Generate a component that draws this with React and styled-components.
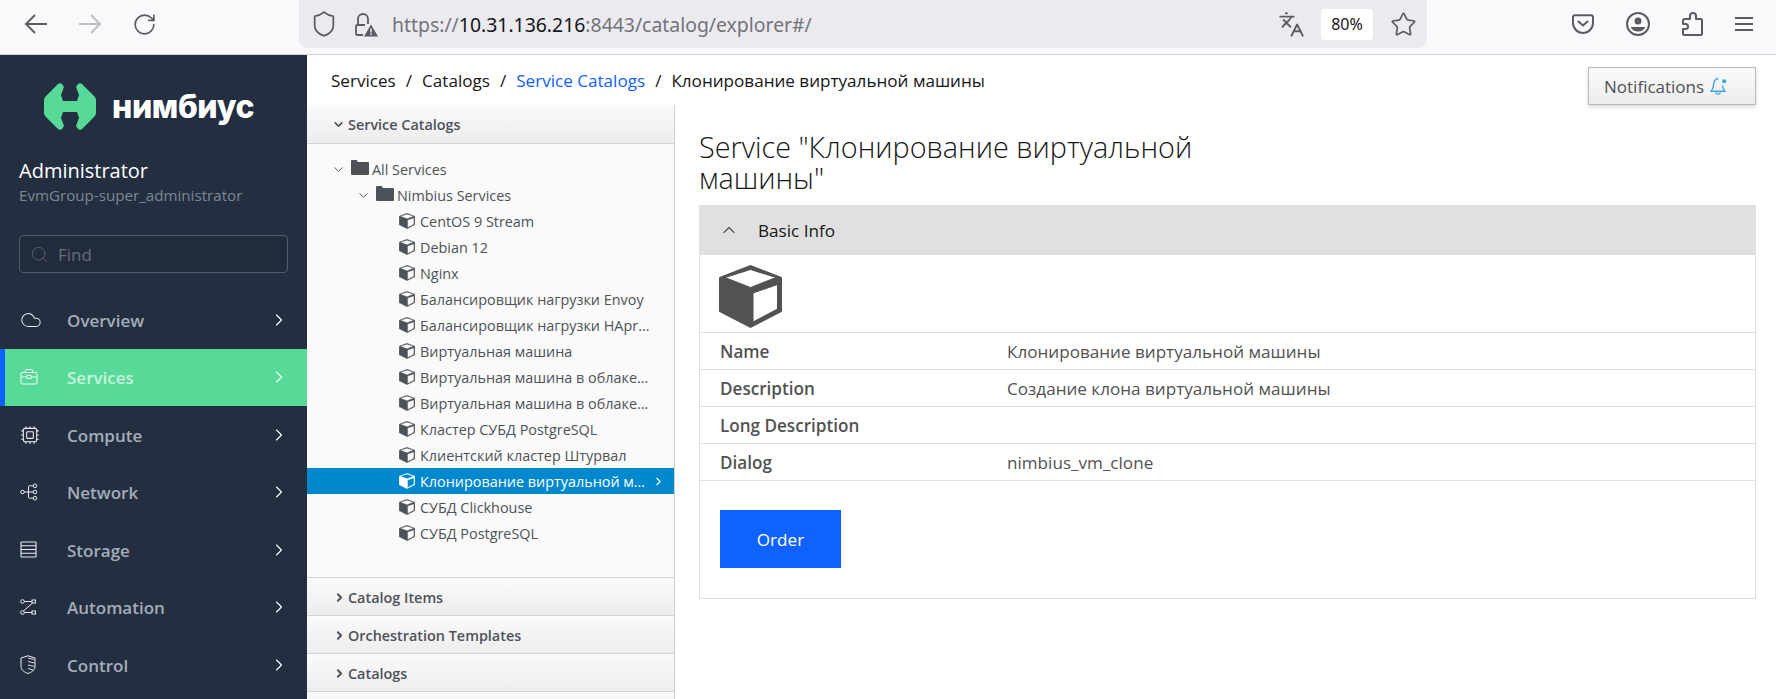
import styled, { createGlobalStyle } from 'styled-components';
import { Shield, Star, Languages, ChevronRight, ChevronDown, ChevronUp, Cloud, Cpu, Search, RotateCw } from 'lucide-react';

const GlobalStyle = createGlobalStyle`
    html, body {
        margin: 0;
        padding: 0;
        background: #fff;
        font-family: "Open Sans", "Noto Sans", sans-serif;
    }
    * { box-sizing: border-box; }
`

const menu = ['Overview', 'Services', 'Compute', 'Network', 'Storage', 'Automation', 'Control'];

const services = [
    'CentOS 9 Stream',
    'Debian 12',
    'Nginx',
    'Балансировщик нагрузки Envoy',
    'Балансировщик нагрузки HApr…',
    'Виртуальная машина',
    'Виртуальная машина в облаке…',
    'Виртуальная машина в облаке…',
    'Кластер СУБД PostgreSQL',
    'Клиентский кластер Штурвал',
    'Клонирование виртуальной м…',
    'СУБД Clickhouse',
    'СУБД PostgreSQL',
];

const info = [
    ['Name', 'Клонирование виртуальной машины'],
    ['Description', 'Создание клона виртуальной машины'],
    ['Long Description', ''],
    ['Dialog', 'nimbius_vm_clone'],
];

function ArrowIcon({ color, flip }) {
    return (
        <svg width="24" height="22" viewBox="0 0 24 22" fill="none" stroke={color} strokeWidth="1.9"
            style={flip ? { transform: 'scaleX(-1)' } : undefined}>
            <path d="M2 11H23M11 2 2 11l9 9" />
        </svg>
    )
}

function LockIcon() {
    return (
        <svg width="24" height="25" viewBox="0 0 24 25" fill="none">
            <path d="M4 13V7a5 5 0 0 1 10 0v5" stroke="#5b5b66" strokeWidth="1.8" />
            <path d="M9 23H3.500A1.500 1.500 0 0 1 2 21.500v-7A1.500 1.500 0 0 1 3.500 13H11" stroke="#5b5b66" strokeWidth="1.8" />
            <path d="M17 12.500 24 24.500H10Z" fill="#5b5b66" />
            <path d="M17 16.500v4M17 21.600v1.400" stroke="#ebebef" strokeWidth="1.500" />
        </svg>
    )
}

function PocketIcon() {
    return (
        <svg width="22" height="20" viewBox="0 0 22 20" fill="none" stroke="#5b5b66" strokeWidth="2">
            <path d="M3 1.200h16a2 2 0 0 1 2 2V9a10 10 0 0 1-20 0V3.200a2 2 0 0 1 2-2Z" />
            <path d="M6.500 7.500 11 11.500l4.500-4" strokeLinecap="round" />
        </svg>
    )
}

function AccountIcon() {
    return (
        <svg width="24" height="24" viewBox="0 0 24 24" fill="none">
            <circle cx="12" cy="12" r="11" stroke="#5b5b66" strokeWidth="2" />
            <circle cx="12" cy="9" r="3.500" fill="#5b5b66" />
            <path d="M4.500 15h15a8.500 8.500 0 0 1-15 0Z" fill="#5b5b66" />
        </svg>
    )
}

function PuzzleIcon() {
    return (
        <svg width="21" height="24" viewBox="0 0 21 24" fill="none" stroke="#5b5b66" strokeWidth="2" strokeLinejoin="round">
            <path d="M7 23H2.500A1.500 1.500 0 0 1 1 21.500V17h2.500a2.500 2.500 0 0 0 0-5H1V8.500A1.500 1.500 0 0 1 2.500 7H8V4a3 3 0 0 1 6 0v3h4.500A1.500 1.500 0 0 1 20 8.500v13a1.500 1.500 0 0 1-1.500 1.500H7Z" />
        </svg>
    )
}

function HamburgerIcon() {
    return (
        <svg width="18" height="16" viewBox="0 0 18 16" stroke="#5b5b66" strokeWidth="1.900">
            <path d="M0 2h18M0 8h18M0 14h18" />
        </svg>
    )
}

function LogoMark() {
    return (
        <svg width="52" height="47" viewBox="0 0 52 47">
            <path
                fill="#57da98"
                d="M14 1Q16-.5 18 1L20 4 17 12 19 18H33L35 12 32 4 34 1Q36-.5 38 1L50 13Q52 15 52 17V30Q52 32 50 34L38 46Q36 47.500 34 46L32 43 35 35 33 29H19L17 35 20 43 18 46Q16 47.500 14 46L2 34Q0 32 0 30V17Q0 15 2 13Z"
            />
        </svg>
    )
}

function CubeIcon({ size }) {
    return (
        <svg width={size} height={size} viewBox="0 0 63 63" style={{ flex: 'none' }}>
            <path
                fill="currentColor"
                stroke="currentColor"
                strokeWidth="1"
                strokeLinejoin="round"
                fillRule="evenodd"
                d="M31.500 .5 62.500 12.500V46.500L31.500 62.500 .5 46.500V12.500ZM31.500 4.500 6 12.500 31.500 22.500 57 12.500ZM34 28V57L58.500 44V19.500Z"
            />
        </svg>
    )
}

function FolderIcon() {
    return (
        <svg width="18" height="15" viewBox="0 0 18 15" style={{ flex: 'none' }}>
            <path fill="currentColor" d="M0 1a1 1 0 0 1 1-1h4.500l1.500 2h10a1 1 0 0 1 1 1v11a1 1 0 0 1-1 1H1a1 1 0 0 1-1-1Z" />
        </svg>
    )
}

function BriefcaseIcon() {
    return (
        <svg width="18" height="16" viewBox="0 0 18 16" fill="none" stroke="currentColor" strokeWidth="1">
            <rect x="1" y="3.500" width="16" height="11.500" rx="1" />
            <path d="M5.500 3.500V1.500a1 1 0 0 1 1-1h5a1 1 0 0 1 1 1v2M1 8h6M11 8h6" />
            <rect x="7" y="6.500" width="4" height="3" />
        </svg>
    )
}

function NetworkIcon() {
    return (
        <svg width="18" height="18" viewBox="0 0 18 18" fill="none" stroke="currentColor" strokeWidth="1">
            <circle cx="2.500" cy="9" r="1.800" />
            <circle cx="15" cy="2.800" r="1.800" />
            <circle cx="15" cy="9" r="1.800" />
            <circle cx="15" cy="15.200" r="1.800" />
            <path d="M4.300 9h9M8.500 9V3.500a.7.7 0 0 1 .7-.7h4M8.500 9v5.500a.7.7 0 0 0 .7.7h4" />
        </svg>
    )
}

function StorageIcon() {
    return (
        <svg width="17" height="17" viewBox="0 0 17 17" fill="none" stroke="currentColor" strokeWidth="1.100">
            <rect x="1" y="1" width="15" height="15" rx=".5" />
            <path d="M1 4.800h15M1 8.500h15M1 12.200h15" />
        </svg>
    )
}

function AutomationIcon() {
    return (
        <svg width="16" height="16" viewBox="0 0 16 16" fill="none" stroke="currentColor" strokeWidth="1">
            <circle cx="2.500" cy="2.500" r="1.800" />
            <rect x="12" y="1" width="3.500" height="3" />
            <circle cx="2.500" cy="13.500" r="1.800" />
            <rect x="12" y="12" width="3.500" height="3" />
            <path d="M4.300 2.500H12M4.300 13.500H12M12.500 4 3.500 12" />
        </svg>
    )
}

function ShieldStripesIcon() {
    return (
        <svg width="16" height="19" viewBox="0 0 16 19" fill="none" stroke="currentColor" strokeWidth="1">
            <path d="M8 .8 15 3v8.500c0 3.500-3.500 5.800-7 7-3.500-1.200-7-3.500-7-7V3Z" />
            <path d="M8 3 14 4.500M8 6.500 14.500 8M8 10 14.500 11.500M8 13.500 13 15" strokeWidth=".9" />
        </svg>
    )
}

function BellIcon() {
    return (
        <svg width="18" height="21" viewBox="0 0 17 20" fill="none" stroke="#39a5dc" strokeWidth="1.300">
            <path d="M7 1.500v1.300C4 3.500 3.300 6 3.300 8.500c0 3-1.300 4.500-2.300 6h13c-1-1.500-2-2.800-2.200-5.500" />
            <path d="M5.300 15.500a2.300 2.300 0 0 0 4.500 0" />
            <circle cx="13.500" cy="5" r="2" fill="#39a5dc" stroke="none" />
        </svg>
    )
}

const menuIcons = {
    Overview: <Cloud size={22} strokeWidth={1.1} />,
    Services: <BriefcaseIcon />,
    Compute: <Cpu size={20} strokeWidth={1.3} />,
    Network: <NetworkIcon />,
    Storage: <StorageIcon />,
    Automation: <AutomationIcon />,
    Control: <ShieldStripesIcon />,
};

function App() {
    return (
        <Page>
            <GlobalStyle />
            <BrowserBar>
                <NavButtons>
                    <ArrowIcon color="#5b5b66" />
                    <ArrowIcon color="#bdbdc2" flip />
                    <RotateCw size={25} color="#5b5b66" strokeWidth={1.6} />
                </NavButtons>
                <AddressBar>
                    <Shield size={28} color="#5b5b66" strokeWidth={1.5} />
                    <LockIcon />
                    <Url>https://<b>10.31.136.216</b>:8443/catalog/explorer#/</Url>
                    <Languages size={27} color="#5b5b66" strokeWidth={1.6} />
                    <ZoomChip>80%</ZoomChip>
                    <Star size={27} color="#5b5b66" strokeWidth={1.500} />
                </AddressBar>
                <BrowserTools>
                    <PocketIcon />
                    <AccountIcon />
                    <PuzzleIcon />
                    <HamburgerIcon />
                </BrowserTools>
            </BrowserBar>

            <Body>
                <Sidebar>
                    <Logo>
                        <LogoMark />
                        <LogoText>нимбиус</LogoText>
                    </Logo>
                    <UserName>Administrator</UserName>
                    <UserGroup>EvmGroup-super_administrator</UserGroup>
                    <SearchBox>
                        <Search size={19} strokeWidth={1.1} color="#5c6570" />
                        <span>Find</span>
                    </SearchBox>
                    <nav>
                        {menu.map((item) =>
                            <MenuItem key={item} $active={item === 'Services'}>
                                <MenuIcon>{menuIcons[item]}</MenuIcon>
                                <MenuLabel>{item}</MenuLabel>
                                <ChevronRight size={20} strokeWidth={1.3} color="#fff" />
                            </MenuItem>
                        )}
                    </nav>
                </Sidebar>

                <Main>
                    <Breadcrumb>
                        <span>Services</span><Sep>/</Sep>
                        <span>Catalogs</span><Sep>/</Sep>
                        <CrumbLink>Service Catalogs</CrumbLink><Sep>/</Sep>
                        <span>Клонирование виртуальной машины</span>
                    </Breadcrumb>
                    <NotifyButton>Notifications <BellIcon /></NotifyButton>

                    <Columns>
                        <TreePane>
                            <AccordionHead $open>
                                <ChevronDown size={13} strokeWidth={3} />
                                Service Catalogs
                            </AccordionHead>
                            <Tree>
                                <FolderRow $level={0}>
                                    <ChevronDown size={15} strokeWidth={1.5} />
                                    <FolderIcon />
                                    All Services
                                </FolderRow>
                                <FolderRow $level={1}>
                                    <ChevronDown size={15} strokeWidth={1.5} />
                                    <FolderIcon />
                                    Nimbius Services
                                </FolderRow>
                                {services.map((name, index) =>
                                    <LeafRow key={index} $selected={index === 10}>
                                        <CubeIcon size={16} />
                                        <span>{name}</span>
                                        {index === 10 && <SelectedArrow><ChevronRight size={13} strokeWidth={2} /></SelectedArrow>}
                                    </LeafRow>
                                )}
                            </Tree>
                            <AccordionHead><ChevronRight size={13} strokeWidth={3.500} />Catalog Items</AccordionHead>
                            <AccordionHead><ChevronRight size={13} strokeWidth={3.500} />Orchestration Templates</AccordionHead>
                            <AccordionHead><ChevronRight size={13} strokeWidth={3.500} />Catalogs</AccordionHead>
                            <AccordionHead />
                        </TreePane>

                        <Content>
                            <Title>Service "Клонирование виртуальной машины"</Title>
                            <Panel>
                                <PanelHead>
                                    <ChevronUp size={20} strokeWidth={1.4} color="#525252" />
                                    Basic Info
                                </PanelHead>
                                <BigCube><CubeIcon size={63} /></BigCube>
                                {info.map(([label, value]) =>
                                    <InfoRow key={label}>
                                        <InfoLabel>{label}</InfoLabel>
                                        <span>{value}</span>
                                    </InfoRow>
                                )}
                                <OrderButton>Order</OrderButton>
                            </Panel>
                        </Content>
                    </Columns>
                </Main>
            </Body>
        </Page>
    )
}

export default App;


const Page = styled.div`
    width: 1776px;
    height: 699px;
    overflow: hidden;
    display: flex;
    flex-direction: column;
`

const BrowserBar = styled.header`
    height: 55px;
    flex: none;
    display: flex;
    background: #f9f9fb;
    border-bottom: 1px solid #cfcfd8;
`

const NavButtons = styled.div`
    width: 299px;
    display: flex;
    align-items: center;
    gap: 30px;
    padding: 0 0 6px 24px;
`

const AddressBar = styled.div`
    width: 1128px;
    height: 48px;
    display: flex;
    align-items: center;
    padding: 0 10px 0 11px;
    background: #ebebef;
    border-radius: 0 0 9px 9px;

    & > svg:nth-child(2) { margin-left: 16px; }
`

const Url = styled.div`
    flex: 1;
    margin-left: 14px;
    font-family: "Noto Sans", sans-serif;
    font-size: 19.400px;
    color: #73737c;
    white-space: nowrap;

    b {
        font-weight: 400;
        color: #15141a;
    }
`

const ZoomChip = styled.div`
    width: 52px;
    height: 31px;
    margin: 0 17px 0 16px;
    display: flex;
    align-items: center;
    justify-content: center;
    background: #fff;
    border-radius: 4px;
    font-family: "Noto Sans", sans-serif;
    font-size: 16px;
    color: #15141a;
`

const BrowserTools = styled.div`
    flex: 1;
    display: flex;
    align-items: center;
    justify-content: space-between;
    padding: 0 23px 6px 145px;
`

const Body = styled.div`
    flex: 1;
    display: flex;
    min-height: 0;
`

const Sidebar = styled.aside`
    width: 307px;
    flex: none;
    background: #232f41;
    padding-top: 27px;
`

const Logo = styled.div`
    display: flex;
    align-items: center;
    gap: 16px;
    height: 48px;
    padding-left: 44px;
`

const LogoText = styled.div`
    font-family: Inter, sans-serif;
    font-weight: 800;
    font-size: 32px;
    letter-spacing: -0.4px;
    color: #fff;
`

const UserName = styled.div`
    margin: 28px 0 0 19px;
    font-size: 20px;
    line-height: 26px;
    color: #fff;
`

const UserGroup = styled.div`
    margin: 1px 0 0 19px;
    font-size: 15.150px;
    line-height: 20px;
    color: #7c8794;
`

const SearchBox = styled.div`
    margin: 30px 19px 18px 19px;
    height: 38px;
    display: flex;
    align-items: center;
    gap: 9px;
    padding-left: 10px;
    background: #212b3b;
    border: 1px solid #515c6b;
    border-radius: 4px;
    font-size: 17px;
    color: #666f7a;
`

const MenuItem = styled.div`
    height: 57.500px;
    display: flex;
    align-items: center;
    padding-right: 18px;
    padding-left: ${(props) => props.$active ? '15px' : '20px'};
    border-left: ${(props) => props.$active ? '5px solid #0f62fe' : 'none'};
    background: ${(props) => props.$active ? '#57da98' : 'transparent'};
    color: ${(props) => props.$active ? '#c9f2dc' : '#a3adb9'};

    svg { color: ${(props) => props.$active ? '#eefaf3' : '#e8eaed'}; }
`

const MenuIcon = styled.div`
    width: 47px;
    display: flex;
    align-items: center;
`

const MenuLabel = styled.div`
    flex: 1;
    padding-top: 1px;
    font-size: 17px;
    font-weight: 600;
`

const Main = styled.main`
    flex: 1;
    min-width: 0;
    position: relative;
    display: flex;
    flex-direction: column;
`

const Breadcrumb = styled.div`
    height: 50px;
    flex: none;
    display: flex;
    align-items: center;
    padding: 0 0 0 24px;
    font-size: 17.100px;
    color: #161616;
`

const Sep = styled.span`
    margin: 0 10px;
`

const CrumbLink = styled.span`
    color: #0f62fe;
`

const NotifyButton = styled.div`
    position: absolute;
    top: 12px;
    right: 20px;
    width: 168px;
    height: 38px;
    display: flex;
    align-items: center;
    gap: 6px;
    padding-left: 15px;
    font-size: 17px;
    color: #4d5258;
    background: linear-gradient(#fafafa, #ededed);
    border: 1px solid #bbb;
    box-shadow: 0 2px 4px rgba(0, 0, 0, 0.15);
`

const Columns = styled.div`
    flex: 1;
    min-height: 0;
    display: flex;
`

const TreePane = styled.div`
    width: 368px;
    flex: none;
    display: flex;
    flex-direction: column;
    background: #fafafa;
    border-right: 1px solid #d1d1d1;
`

const AccordionHead = styled.div`
    height: ${(props) => props.$open ? '39px' : '38px'};
    flex: none;
    display: flex;
    align-items: center;
    gap: ${(props) => props.$open ? '3px' : '2px'};
    padding: ${(props) => props.$open ? '0 0 0 25px' : '1px 0 0 26px'};
    font-size: 14.400px;
    font-weight: 600;
    color: #4d5258;
    background: linear-gradient(#fafafa, #ededed);
    border-bottom: 1px solid #d1d1d1;
`

const Tree = styled.div`
    height: 434px;
    flex: none;
    padding-top: 12px;
    border-bottom: 1px solid #d1d1d1;
    font-size: 14.400px;
    color: #4d5258;
`

const FolderRow = styled.div`
    height: 26px;
    display: flex;
    align-items: center;
    padding-left: ${(props) => 24 + props.$level * 25}px;

    & > svg:first-child { margin-right: 5px; }
    & > svg:nth-child(2) { margin-right: 3px; margin-top: -3px; }
`

const LeafRow = styled.div`
    height: 26px;
    display: flex;
    align-items: center;
    gap: 5px;
    padding-left: 92px;
    white-space: nowrap;
    position: relative;
    color: ${(props) => props.$selected ? '#fff' : 'inherit'};
    background: ${(props) => props.$selected ? '#0088ce' : 'transparent'};
`

const SelectedArrow = styled.div`
    position: absolute;
    right: 9px;
    top: 7px;
    display: flex;
`

const Content = styled.div`
    flex: 1;
    min-width: 0;
    padding: 0 20px 0 24px;
`

const Title = styled.h1`
    width: 520px;
    margin: 26px 0 12px;
    font-size: 28.800px;
    font-weight: 300;
    line-height: 31px;
    color: #161616;
`

const Panel = styled.section`
    height: 394px;
    border: 1px solid #e0e0e0;
    border-top: none;
    font-size: 17.100px;
    color: #525252;
`

const PanelHead = styled.div`
    height: 50px;
    display: flex;
    align-items: center;
    gap: 19px;
    margin: 0 -1px;
    padding-left: 20px;
    background: #e0e0e0;
    color: #161616;
`

const BigCube = styled.div`
    height: 78px;
    padding: 10px 0 0 19px;
    border-bottom: 1px solid #e0e0e0;
    color: #525252;
`

const InfoRow = styled.div`
    height: 37px;
    display: grid;
    grid-template-columns: 287px 1fr;
    align-items: center;
    padding-left: 20px;
    border-bottom: 1px solid #e0e0e0;
`

const InfoLabel = styled.span`
    font-weight: 600;
`

const OrderButton = styled.div`
    width: 121px;
    height: 58px;
    margin: 29px 0 0 20px;
    display: flex;
    align-items: center;
    justify-content: center;
    background: #0f62fe;
    color: #fff;
`
